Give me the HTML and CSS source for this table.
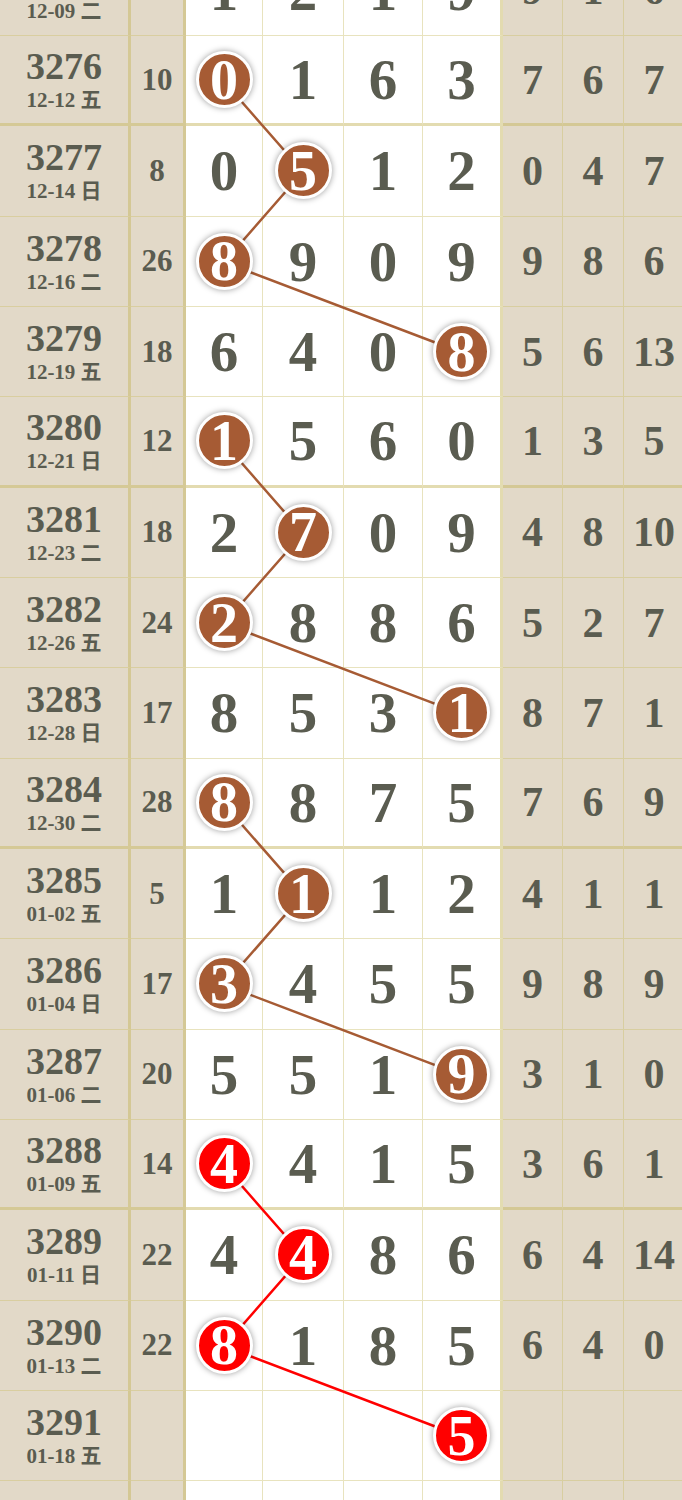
FILE: index.html
```html
<!DOCTYPE html>
<html>
<head>
  <title>走势图</title>
  <link rel="stylesheet" href="styles.css">
</head>
<body>

  <div class="chart">

    <svg class="links" width="685" height="1630" viewBox="0 0 685 1630">
      <polyline class="link" points="224,135.5 303,225.8 224,316.2 461.5,406.5"/>
      <polyline class="link" points="224,496.8 303,587.2 224,677.5 461.5,767.8"/>
      <polyline class="link" points="224,858.2 303,948.5 224,1038.8 461.5,1129.2"/>
      <polyline class="link hot" points="224,1219.5 303,1309.8 224,1400.2 461.5,1490.5"/>
    </svg>

    <div class="row">
      <div class="cell issue"><span class="no">3275</span><span class="date">12-09 二</span></div>
      <div class="cell sum">13</div>
      <div class="cell num">1</div><div class="cell num">2</div><div class="cell num">1</div><div class="cell num last">9</div>
      <div class="cell tail">9</div><div class="cell tail">1</div><div class="cell tail">6</div>
    </div>

    <div class="row sep">
      <div class="cell issue"><span class="no">3276</span><span class="date">12-12 五</span></div>
      <div class="cell sum">10</div>
      <div class="cell num"><span class="ball">0</span></div><div class="cell num">1</div><div class="cell num">6</div><div class="cell num last">3</div>
      <div class="cell tail">7</div><div class="cell tail">6</div><div class="cell tail">7</div>
    </div>

    <div class="row">
      <div class="cell issue"><span class="no">3277</span><span class="date">12-14 日</span></div>
      <div class="cell sum">8</div>
      <div class="cell num">0</div><div class="cell num"><span class="ball">5</span></div><div class="cell num">1</div><div class="cell num last">2</div>
      <div class="cell tail">0</div><div class="cell tail">4</div><div class="cell tail">7</div>
    </div>

    <div class="row">
      <div class="cell issue"><span class="no">3278</span><span class="date">12-16 二</span></div>
      <div class="cell sum">26</div>
      <div class="cell num"><span class="ball">8</span></div><div class="cell num">9</div><div class="cell num">0</div><div class="cell num last">9</div>
      <div class="cell tail">9</div><div class="cell tail">8</div><div class="cell tail">6</div>
    </div>

    <div class="row">
      <div class="cell issue"><span class="no">3279</span><span class="date">12-19 五</span></div>
      <div class="cell sum">18</div>
      <div class="cell num">6</div><div class="cell num">4</div><div class="cell num">0</div><div class="cell num last"><span class="ball">8</span></div>
      <div class="cell tail">5</div><div class="cell tail">6</div><div class="cell tail">13</div>
    </div>

    <div class="row sep">
      <div class="cell issue"><span class="no">3280</span><span class="date">12-21 日</span></div>
      <div class="cell sum">12</div>
      <div class="cell num"><span class="ball">1</span></div><div class="cell num">5</div><div class="cell num">6</div><div class="cell num last">0</div>
      <div class="cell tail">1</div><div class="cell tail">3</div><div class="cell tail">5</div>
    </div>

    <div class="row">
      <div class="cell issue"><span class="no">3281</span><span class="date">12-23 二</span></div>
      <div class="cell sum">18</div>
      <div class="cell num">2</div><div class="cell num"><span class="ball">7</span></div><div class="cell num">0</div><div class="cell num last">9</div>
      <div class="cell tail">4</div><div class="cell tail">8</div><div class="cell tail">10</div>
    </div>

    <div class="row">
      <div class="cell issue"><span class="no">3282</span><span class="date">12-26 五</span></div>
      <div class="cell sum">24</div>
      <div class="cell num"><span class="ball">2</span></div><div class="cell num">8</div><div class="cell num">8</div><div class="cell num last">6</div>
      <div class="cell tail">5</div><div class="cell tail">2</div><div class="cell tail">7</div>
    </div>

    <div class="row">
      <div class="cell issue"><span class="no">3283</span><span class="date">12-28 日</span></div>
      <div class="cell sum">17</div>
      <div class="cell num">8</div><div class="cell num">5</div><div class="cell num">3</div><div class="cell num last"><span class="ball">1</span></div>
      <div class="cell tail">8</div><div class="cell tail">7</div><div class="cell tail">1</div>
    </div>

    <div class="row sep">
      <div class="cell issue"><span class="no">3284</span><span class="date">12-30 二</span></div>
      <div class="cell sum">28</div>
      <div class="cell num"><span class="ball">8</span></div><div class="cell num">8</div><div class="cell num">7</div><div class="cell num last">5</div>
      <div class="cell tail">7</div><div class="cell tail">6</div><div class="cell tail">9</div>
    </div>

    <div class="row">
      <div class="cell issue"><span class="no">3285</span><span class="date">01-02 五</span></div>
      <div class="cell sum">5</div>
      <div class="cell num">1</div><div class="cell num"><span class="ball">1</span></div><div class="cell num">1</div><div class="cell num last">2</div>
      <div class="cell tail">4</div><div class="cell tail">1</div><div class="cell tail">1</div>
    </div>

    <div class="row">
      <div class="cell issue"><span class="no">3286</span><span class="date">01-04 日</span></div>
      <div class="cell sum">17</div>
      <div class="cell num"><span class="ball">3</span></div><div class="cell num">4</div><div class="cell num">5</div><div class="cell num last">5</div>
      <div class="cell tail">9</div><div class="cell tail">8</div><div class="cell tail">9</div>
    </div>

    <div class="row">
      <div class="cell issue"><span class="no">3287</span><span class="date">01-06 二</span></div>
      <div class="cell sum">20</div>
      <div class="cell num">5</div><div class="cell num">5</div><div class="cell num">1</div><div class="cell num last"><span class="ball">9</span></div>
      <div class="cell tail">3</div><div class="cell tail">1</div><div class="cell tail">0</div>
    </div>

    <div class="row sep">
      <div class="cell issue"><span class="no">3288</span><span class="date">01-09 五</span></div>
      <div class="cell sum">14</div>
      <div class="cell num"><span class="ball hot">4</span></div><div class="cell num">4</div><div class="cell num">1</div><div class="cell num last">5</div>
      <div class="cell tail">3</div><div class="cell tail">6</div><div class="cell tail">1</div>
    </div>

    <div class="row">
      <div class="cell issue"><span class="no">3289</span><span class="date">01-11 日</span></div>
      <div class="cell sum">22</div>
      <div class="cell num">4</div><div class="cell num"><span class="ball hot">4</span></div><div class="cell num">8</div><div class="cell num last">6</div>
      <div class="cell tail">6</div><div class="cell tail">4</div><div class="cell tail">14</div>
    </div>

    <div class="row">
      <div class="cell issue"><span class="no">3290</span><span class="date">01-13 二</span></div>
      <div class="cell sum">22</div>
      <div class="cell num"><span class="ball hot">8</span></div><div class="cell num">1</div><div class="cell num">8</div><div class="cell num last">5</div>
      <div class="cell tail">6</div><div class="cell tail">4</div><div class="cell tail">0</div>
    </div>

    <div class="row">
      <div class="cell issue"><span class="no">3291</span><span class="date">01-18 五</span></div>
      <div class="cell sum"></div>
      <div class="cell num"></div><div class="cell num"></div><div class="cell num"></div><div class="cell num last"><span class="ball hot">5</span></div>
      <div class="cell tail"></div><div class="cell tail"></div><div class="cell tail"></div>
    </div>

    <div class="row">
      <div class="cell issue"></div>
      <div class="cell sum"></div>
      <div class="cell num"></div><div class="cell num"></div><div class="cell num"></div><div class="cell num last"></div>
      <div class="cell tail"></div><div class="cell tail"></div><div class="cell tail"></div>
    </div>

  </div>

</body>
</html>
```

FILE: styles.css
```css
body {
  margin: 0;
  overflow: hidden;
  background-color: #e2d9c8;
  font-family: "Liberation Serif", "Noto Sans CJK SC", serif;
  font-weight: bold;
  color: #5a5c50;
}

.chart {
  position: relative;
  width: 685px;
  margin-top: -54.33px;
}

.links {
  position: absolute;
  top: 0;
  left: 0;
  z-index: 1;
  pointer-events: none;
}

.link {
  fill: none;
  stroke: #a65b34;
  stroke-width: 2.5;
}

.link.hot {
  stroke: #f00;
}

.row {
  display: grid;
  grid-template-columns: 131px 55px 77px 81px 79px 80px 60px 61px 61px;
  height: 90.33px;
}

.cell {
  display: flex;
  align-items: center;
  justify-content: center;
  box-sizing: border-box;
  border-right: 1px solid rgba(205, 192, 110, 0.45);
  border-bottom: 1px solid rgba(205, 192, 110, 0.45);
  background-color: #e2d9c8;
}

.row.sep .cell {
  border-bottom: 3px solid rgba(200, 185, 100, 0.5);
}

.issue {
  flex-direction: column;
  border-right: 3px solid rgba(200, 185, 100, 0.5);
}

.issue .no {
  font-size: 38px;
  line-height: 36px;
}

.issue .date {
  font-size: 21px;
  line-height: 22px;
  margin-top: 5px;
}

.sum {
  font-size: 31px;
  border-right: 3px solid rgba(200, 185, 100, 0.5);
}

.num {
  background-color: #fff;
  font-size: 57px;
}

.num.last {
  border-right: 3px solid rgba(200, 185, 100, 0.5);
}

.tail {
  font-size: 42px;
}

.ball {
  position: relative;
  z-index: 2;
  display: flex;
  align-items: center;
  justify-content: center;
  width: 51px;
  height: 51px;
  border: 3px solid #fff;
  border-radius: 50%;
  background-color: #a65b34;
  box-shadow: 0 0 6px rgba(0, 0, 0, 0.4);
  color: #fff;
  font-size: 56px;
  line-height: 1;
}

.ball.hot {
  background-color: #f00;
}
```
